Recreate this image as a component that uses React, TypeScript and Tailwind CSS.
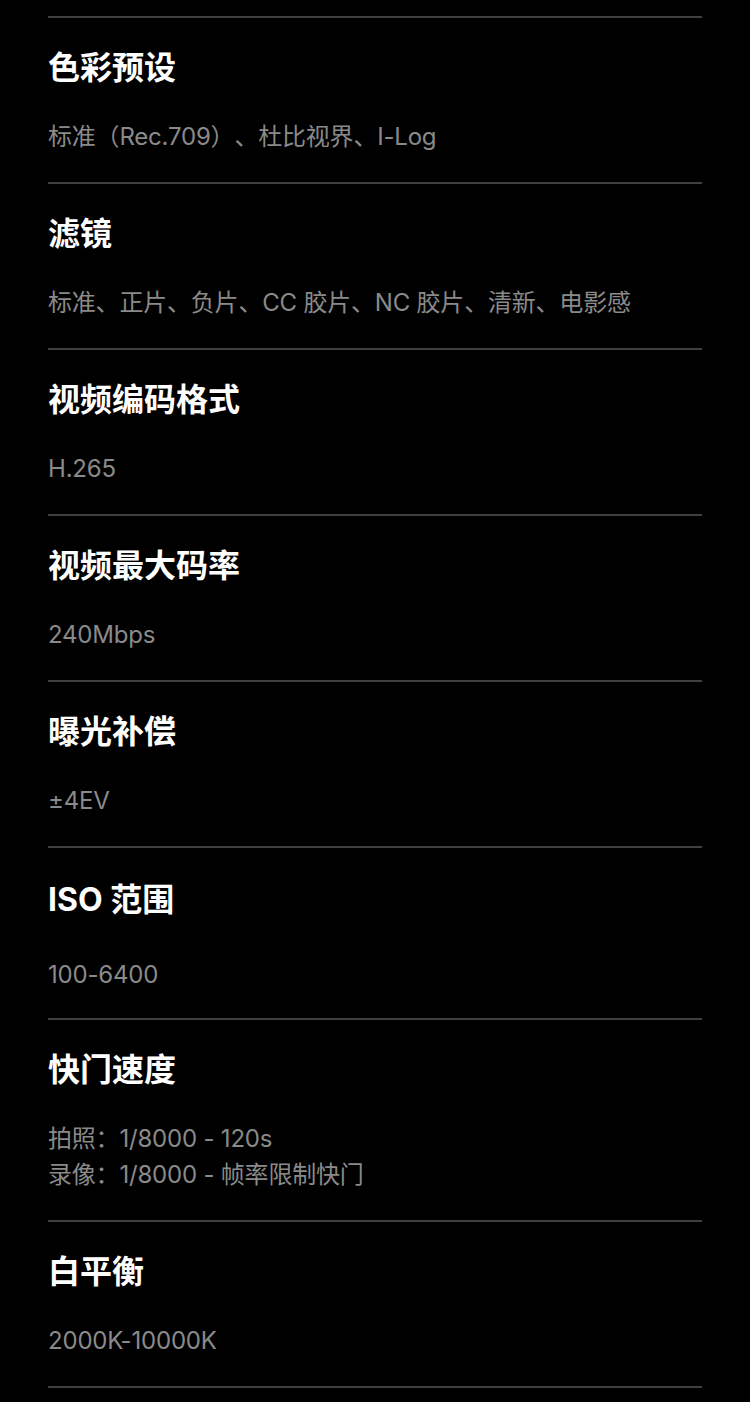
import React from "react";

type Item = { title: string; values: string[]; iso?: boolean };

const items: Item[] = [
  { title: "色彩预设", values: ["标准（Rec.709）、杜比视界、I-Log"] },
  { title: "滤镜", values: ["标准、正片、负片、CC 胶片、NC 胶片、清新、电影感"] },
  { title: "视频编码格式", values: ["H.265"] },
  { title: "视频最大码率", values: ["240Mbps"] },
  { title: "曝光补偿", values: ["±4EV"] },
  { title: "ISO 范围", values: ["100-6400"], iso: true },
  { title: "快门速度", values: ["拍照：1/8000 - 120s", "录像：1/8000 - 帧率限制快门"] },
  { title: "白平衡", values: ["2000K-10000K"] },
];

export default function App() {
  return (
    <div
      className="min-h-[1402px] w-[750px] bg-black pt-4 [text-spacing-trim:space-all]"
      style={{ fontFamily: 'Inter, "Noto Sans CJK SC", sans-serif' }}
    >
      <div className="mx-12 w-[654px] border-b-2 border-[#404040]">
        {items.map((it) => (
          <div
            key={it.title}
            className={
              it.iso
                ? "border-t-2 border-[#404040] pt-[32px] pb-[25px]"
                : "border-t-2 border-[#404040] pt-[30px] pb-[27px]"
            }
          >
            <div className="text-[32px] font-bold leading-[40px] text-white">{it.title}</div>
            <div className={it.iso ? "mt-[37px]" : "mt-[31px]"}>
              {it.values.map((v) => (
                <div key={v} className="text-[24px] leading-[36px] tracking-[-0.2px] text-[#8a8a8a]">
                  {v}
                </div>
              ))}
            </div>
          </div>
        ))}
      </div>
    </div>
  );
}
